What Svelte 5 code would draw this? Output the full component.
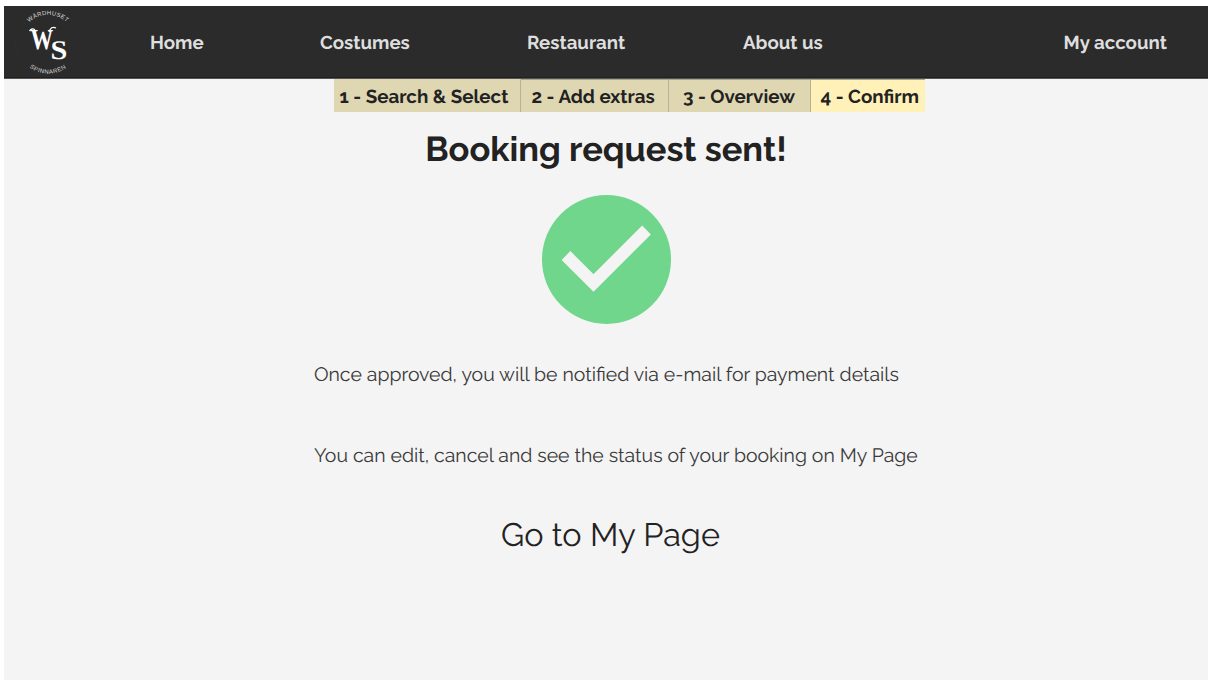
<script>
  const links = [
    { label: 'Home', width: 170 },
    { label: 'Costumes', width: 207 },
    { label: 'Restaurant', width: 216 },
    { label: 'About us', width: 320.5 },
    { label: 'My account', width: 120 }
  ];
  const steps = [
    { label: '1 - Search & Select', width: 187, pad: 5.5 },
    { label: '2 - Add extras', width: 148, pad: 10.5 },
    { label: '3 - Overview', width: 142, pad: 14 },
    { label: '4 - Confirm', width: 114, pad: 9.5 }
  ];
</script>

<div class="page">
  <header>
    <svg class="logo" viewBox="0 0 76 72" width="76" height="72">
      <defs>
        <path id="arc-top" d="M20.5 22.5 A27 27 0 0 1 67.5 22.5" />
        <path id="arc-bottom" d="M16.8 52 A31.5 31.5 0 0 0 71.2 52" />
      </defs>
      <circle cx="44" cy="36" r="33" fill="none" stroke="#2e2e2e" />
      <text class="ring top"><textPath href="#arc-top" startOffset="50%" text-anchor="middle">WÄRDHUSET</textPath></text>
      <text class="ring"><textPath href="#arc-bottom" startOffset="50%" text-anchor="middle">SPINNAREN</textPath></text>
      <text class="mono" transform="translate(26.5 42.5) scale(.78 1)" font-size="29">W</text>
      <path d="M25.5 25 Q28 21.5 31 24 M45 26 Q47 19.5 52 22" fill="none" stroke="#fff" stroke-width="1.3" />
      <text class="mono" transform="translate(46.5 53) scale(1.12 1)" font-size="27">S</text>
    </svg>
    <nav>
      {#each links as link}
        <a href="#top" style="width: {link.width}px">{link.label}</a>
      {/each}
    </nav>
  </header>

  <ol class="steps">
    {#each steps as step, i}
      <li class:active={i === 3} style="width: {step.width}px; padding-left: {step.pad}px">{step.label}</li>
    {/each}
  </ol>

  <main>
    <h1>Booking request sent!</h1>
    <svg class="check" viewBox="0 0 129 129" width="129" height="129">
      <circle cx="64.5" cy="64.5" r="64.5" fill="#6fd68b" />
      <path d="M24 60.5 L51.5 88 L104.5 35" fill="none" stroke="#f4f4f4" stroke-width="12.4" />
    </svg>
    <div class="notes">
      <p>Once approved, you will be notified via e-mail for payment details</p>
      <p>You can edit, cancel and see the status of your booking on My Page</p>
    </div>
    <a class="go" href="#top">Go to My Page</a>
  </main>
</div>

<style>
  :global(body) { background: #fff; display: flow-root; }
  .page {
    box-sizing: border-box;
    height: 674px;
    margin: 6px 2px 0 4px;
    background: #f4f4f4;
    color: #222;
    font-family: Raleway, Lato, sans-serif;
    text-rendering: geometricPrecision;
    overflow: hidden;
    white-space: nowrap;
  }
  header {
    box-sizing: border-box;
    display: flex;
    height: 73px;
    background: #2b2b2b;
    border-bottom: 1px solid #555;
    box-shadow: inset 0 -1px #202020;
  }
  .logo { flex: none; }
  .ring { fill: #ddd; font: 6px "Liberation Sans", sans-serif; letter-spacing: 0.5px; }
  .ring.top { letter-spacing: 0.3px; }
  .mono { fill: #fff; font-family: "Liberation Serif", serif; font-weight: bold; }
  nav { display: flex; align-items: center; padding: 1px 0 0 70px; }
  nav a { color: #dedede; font-weight: 700; font-size: 18.7px; line-height: 24px; text-decoration: none; }
  .steps { display: flex; margin: 0 0 0 330px; padding: 0; list-style: none; height: 33px; }
  .steps li {
    box-sizing: border-box;
    height: 33px;
    background: #dfd6b2;
    border-right: 1px solid #b7b098;
    border-top: 1px solid #aaa58f;
    font-size: 18.8px;
    font-weight: 700;
    line-height: 35px;
  }
  .steps li:first-child { border-top-color: #dfd6b2; }
  .steps li.active { background: #fff1b8; border-right: 0; }
  main { display: flex; flex-direction: column; align-items: center; }
  h1 { margin: 16px 0 0; font-size: 34.4px; line-height: 44px; font-weight: 700; }
  .check { margin-top: 23px; flex: none; }
  .notes { display: grid; gap: 55px; width: 604px; margin: 38px 0 0 20px; }
  p { margin: 0; font-size: 19.44px; line-height: 26px; color: #3a3a3a; }
  .go { margin: 45px 0 0 9px; font-size: 32.4px; line-height: 42px; font-weight: 400; color: #222; text-decoration: none; }
</style>
